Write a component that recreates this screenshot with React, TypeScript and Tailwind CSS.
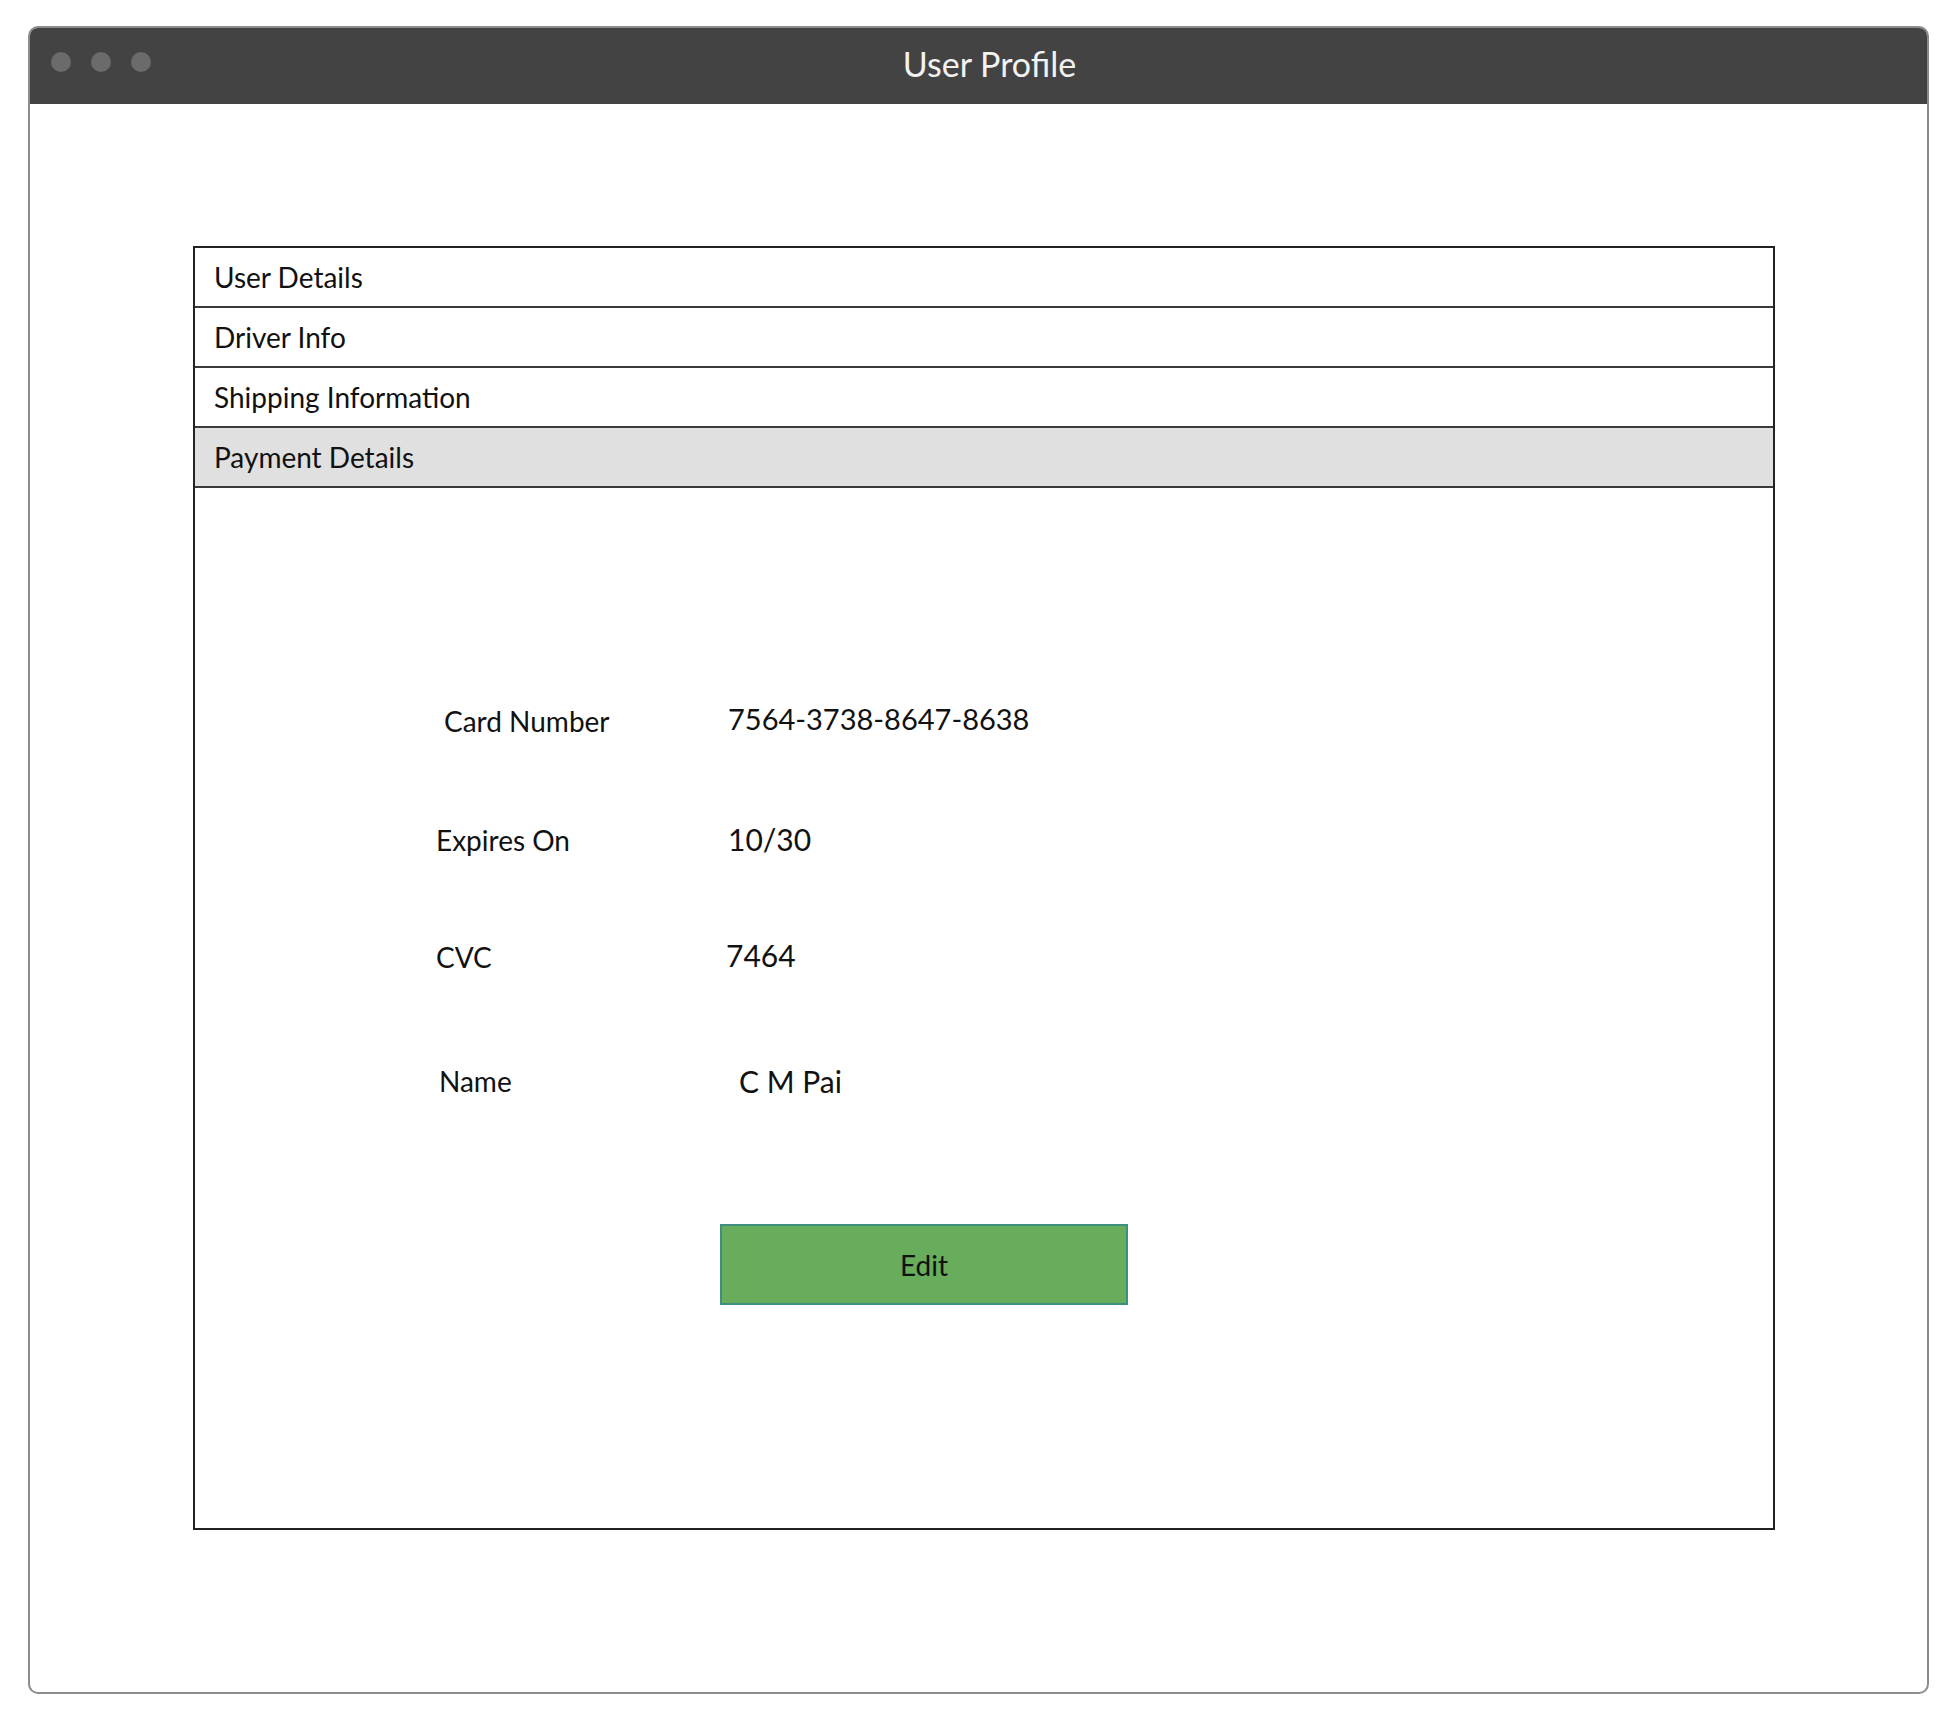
import React from "react";

const font = { fontFamily: "Lato, 'Open Sans', sans-serif" };

export default function App() {
  const rows = ["User Details", "Driver Info", "Shipping Information"];
  return (
    <div className="w-[1960px] h-[1728px] bg-white" style={font}>
      <div className="relative left-[28px] top-[26px] w-[1901px] h-[1668px] border-2 border-[#8c8c8c] rounded-[10px] overflow-hidden bg-white flex flex-col">
        <div className="h-[76px] shrink-0 bg-[#434343] flex items-center relative">
          <div className="absolute left-[21px] top-[24px] flex gap-[20px]">
            <div className="w-[20px] h-[20px] rounded-full bg-[#6b6b6b]" />
            <div className="w-[20px] h-[20px] rounded-full bg-[#6b6b6b]" />
            <div className="w-[20px] h-[20px] rounded-full bg-[#6b6b6b]" />
          </div>
          <div className="flex-1 flex justify-center pl-[22px] text-[34px] text-[#f2f2f2] leading-none -translate-y-[2px]">
            User Profile
          </div>
        </div>
        <div className="flex-1 pt-[142px] pl-[163px]">
          <div className="w-[1582px] h-[1284px] border-2 border-[#222] flex flex-col">
            {rows.map((r) => (
              <div
                key={r}
                className="h-[60px] shrink-0 border-b-2 border-[#3a3a3a] flex items-center pl-[19px] text-[28px] text-[#111]"
              >
                {r}
              </div>
            ))}
            <div className="h-[60px] shrink-0 border-b-2 border-[#3a3a3a] bg-[#e0e0e0] flex items-center pl-[19px] text-[28px] text-[#111]">
              Payment Details
            </div>
            <div className="flex-1 flex flex-col pl-[241px] pt-[203px] text-[#111]">
              <div className="h-[60px] flex items-center">
                <div className="w-[292px] pl-[8px] text-[28px]">Card Number</div>
                <div className="text-[29px] -translate-y-[2px]">7564-3738-8647-8638</div>
              </div>
              <div className="h-[60px] mt-[59px] flex items-center">
                <div className="w-[292px] text-[28px]">Expires On</div>
                <div className="text-[30px] -translate-y-[1px]">10/30</div>
              </div>
              <div className="h-[60px] mt-[57px] flex items-center">
                <div className="w-[290px] text-[28px]">CVC</div>
                <div className="text-[30px] -translate-y-[2px]">7464</div>
              </div>
              <div className="h-[60px] mt-[64px] flex items-center">
                <div className="w-[303px] pl-[3px] text-[28px]">Name</div>
                <div className="text-[30px]">C M Pai</div>
              </div>
              <button className="mt-[113px] ml-[284px] w-[408px] h-[81px] bg-[#67ad5b] border-2 border-[#3d8f80] text-[28px] text-[#111] flex items-center justify-center">
                Edit
              </button>
            </div>
          </div>
        </div>
      </div>
    </div>
  );
}
